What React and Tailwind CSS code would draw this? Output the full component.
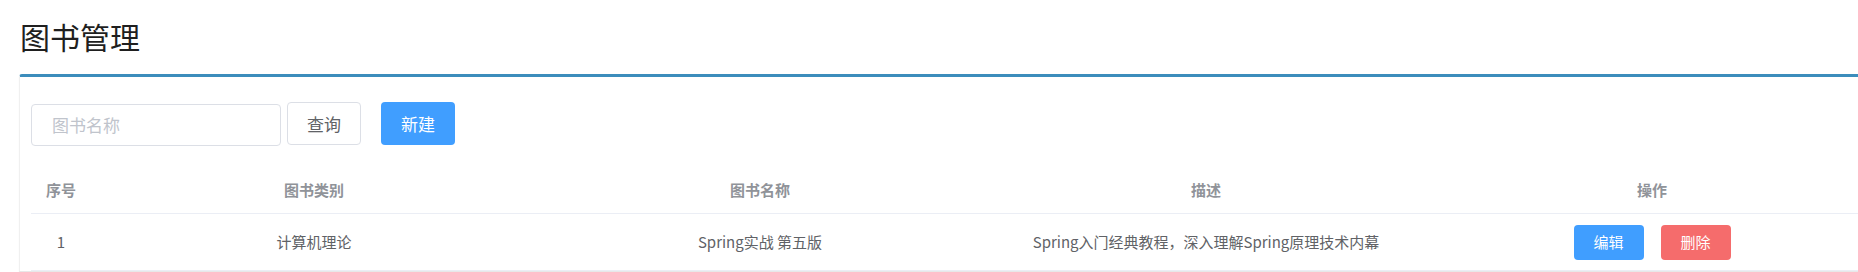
import React from "react";

const font = { fontFamily: '"Noto Sans CJK SC", "Noto Sans", sans-serif' };

export default function App() {
  return (
    <div
      className="w-[1858px] h-[272px] overflow-hidden bg-white"
      style={font}
    >
      <div className="h-[74px] pt-[21px] pl-[20px] text-[30px] leading-[30px] text-[#1f1f1f]">
        图书管理
      </div>
      <div className="ml-[19px] w-[1868px] border-t-[3px] border-[#3c8dbc] rounded-tl-[3px] rounded-tr-[3px] shadow-[0_1px_1px_rgba(0,0,0,0.1)] border-l border-l-[#f0f0f0] pl-[11px] pr-[12px] pt-[25px]">
        <div className="flex items-start">
          <div className="mt-[2px] w-[250px] h-[42px] border border-[#dcdfe6] rounded-[4px] flex items-center pl-[20px] text-[17px] text-[#c0c4cc]">
            图书名称
          </div>
          <button className="ml-[6px] w-[74px] h-[43px] border border-[#dcdfe6] rounded-[4px] bg-white text-[17px] text-[#606266] flex items-center justify-center">
            查询
          </button>
          <button className="ml-[20px] w-[74px] h-[43px] rounded-[4px] bg-[#409eff] text-[17px] text-white flex items-center justify-center">
            新建
          </button>
        </div>
        <div className="mt-[21px] w-[1844px]">
          <div className="grid grid-cols-[60px_446px_446px_446px_446px] h-[47px] border-b border-[#ebeef5] text-[15px] font-bold text-[#909399]">
            <div className="flex items-center justify-center">序号</div>
            <div className="flex items-center justify-center">图书类别</div>
            <div className="flex items-center justify-center">图书名称</div>
            <div className="flex items-center justify-center">描述</div>
            <div className="flex items-center justify-center">操作</div>
          </div>
          <div className="grid grid-cols-[60px_446px_446px_446px_446px] h-[57px] border-b border-[#ebeef5] text-[15px] text-[#606266]">
            <div className="flex items-center justify-center">1</div>
            <div className="flex items-center justify-center">计算机理论</div>
            <div className="flex items-center justify-center">Spring实战 第五版</div>
            <div className="flex items-center justify-center">
              Spring入门经典教程，深入理解Spring原理技术内幕
            </div>
            <div className="flex items-center justify-center gap-[17px]">
              <button className="w-[70px] h-[35px] rounded-[4px] bg-[#409eff] text-white text-[15px] flex items-center justify-center">
                编辑
              </button>
              <button className="w-[70px] h-[35px] rounded-[4px] bg-[#f56c6c] text-white text-[15px] flex items-center justify-center">
                删除
              </button>
            </div>
          </div>
        </div>
      </div>
    </div>
  );
}
